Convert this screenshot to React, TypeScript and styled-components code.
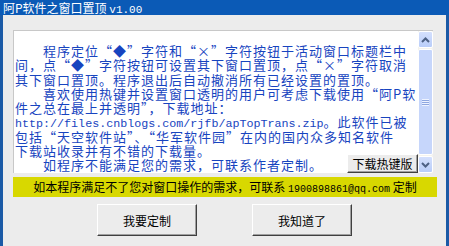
import React from "react";
import styled, { createGlobalStyle } from "styled-components";

const GlobalStyle = createGlobalStyle`
  html, body {
    margin: 0;
    padding: 0;
    background: #ececec;
  }
`;

const cjk = `"Noto Sans CJK SC", "Noto Sans", sans-serif`;

const Window = styled.div`
  width: 449px;
  height: 246px;
  display: flex;
  flex-direction: column;
  overflow: hidden;
  font-family: ${cjk};
  background: #ececec;
`;

const TitleBar = styled.div`
  height: 15px;
  background: #0b5ab6;
  color: #ffffff;
  font-size: 12px;
  line-height: 15px;
  padding-left: 3px;
  white-space: nowrap;
`;

const Body = styled.div`
  flex: 1;
  border-left: 3px solid #1b5aa6;
  border-right: 3px solid #1b5aa6;
  padding: 15px 0 0 10px;
  display: flex;
  flex-direction: column;
`;

const Panel = styled.div`
  position: relative;
  width: 420px;
  height: 143px;
  box-sizing: border-box;
  border-top: 1px solid #c8c8c8;
  border-left: 1px solid #c8c8c8;
  background: #ffffff;
  display: flex;
`;

const TextArea = styled.div`
  flex: 1;
  padding: 13px 0 0 1px;
  color: #1744bf;
  font-size: 13px;
  letter-spacing: 1px;
`;

const Line = styled.div<{ $indent?: boolean }>`
  height: 14.3px;
  line-height: 14.3px;
  white-space: nowrap;
  text-indent: ${(p) => (p.$indent ? "28px" : "0")};
`;

const Mono = styled.span<{ $size?: number }>`
  font-family: "Liberation Mono", monospace;
  font-size: ${(p) => p.$size ?? 11.7}px;
  letter-spacing: 0;
`;

const ScrollBar = styled.div`
  width: 15px;
  display: flex;
  flex-direction: column;
  background: #f4f3ee;
  gap: 1px;
`;

const ArrowBtn = styled.div`
  height: 17px;
  box-sizing: border-box;
  border: 1px solid #ffffff;
  border-radius: 2px;
  background: linear-gradient(#d4e0fd, #b9cdf9);
  display: flex;
  align-items: center;
  justify-content: center;
`;

const Thumb = styled.div`
  flex: 1;
  box-sizing: border-box;
  border: 1px solid #ffffff;
  border-radius: 2px;
  background: #c6d6fb;
  display: flex;
  align-items: center;
  justify-content: center;
`;

const Grip = styled.div`
  width: 7px;
  height: 7px;
  background: repeating-linear-gradient(#eef3ff 0 1px, #8ea7e0 1px 2px);
`;

const SmallButton = styled.button`
  position: absolute;
  right: 15px;
  bottom: 0;
  width: 71px;
  height: 19px;
  padding: 0;
  font-family: ${cjk};
  font-size: 12px;
  line-height: 17px;
  color: #000;
  background: #ececec;
  border: 1px solid;
  border-color: #ffffff #404040 #404040 #ffffff;
  box-shadow: inset -1px -1px 0 #a0a0a0;
`;

const Notice = styled.div`
  margin-top: 4px;
  width: 424px;
  height: 20px;
  background: #d8d800;
  color: #000;
  font-size: 12px;
  line-height: 20px;
  text-align: center;
  white-space: nowrap;
`;

const ButtonRow = styled.div`
  display: flex;
  justify-content: center;
  gap: 55px;
  margin-top: 7px;
  margin-left: -10px;
`;

const Button = styled.button`
  width: 100px;
  height: 32px;
  padding: 0;
  font-family: ${cjk};
  font-size: 12px;
  color: #000;
  background: #ececec;
  border: 1px solid;
  border-color: #ffffff #404040 #404040 #ffffff;
  box-shadow: inset -1px -1px 0 #a0a0a0;
`;

const Chevron = ({ up }: { up?: boolean }) => (
  <svg width="9" height="6" viewBox="0 0 9 6">
    <polyline
      points={up ? "1,5 4.5,1.5 8,5" : "1,1 4.5,4.5 8,1"}
      fill="none"
      stroke="#4d6185"
      strokeWidth="2"
    />
  </svg>
);

export default function App() {
  return (
    <Window lang="zh-CN">
      <GlobalStyle />
      <TitleBar>阿P软件之窗口置顶 <Mono $size={11}>v1.00</Mono></TitleBar>
      <Body>
        <Panel>
          <TextArea>
            <Line $indent>程序定位“◆”字符和“×”字符按钮于活动窗口标题栏中</Line>
            <Line>间，点“◆”字符按钮可设置其下窗口置顶，点“×”字符取消</Line>
            <Line>其下窗口置顶。程序退出后自动撤消所有已经设置的置顶。</Line>
            <Line $indent>喜欢使用热键并设置窗口透明的用户可考虑下载使用“阿P软</Line>
            <Line>件之总在最上并透明”，下载地址：</Line>
            <Line><Mono>http://files.cnblogs.com/rjfb/apTopTrans.zip</Mono>。此软件已被</Line>
            <Line>包括“天空软件站”、“华军软件园”在内的国内众多知名软件</Line>
            <Line>下载站收录并有不错的下载量。</Line>
            <Line $indent>如程序不能满足您的需求，可联系作者定制。</Line>
          </TextArea>
          <ScrollBar>
            <ArrowBtn><Chevron up /></ArrowBtn>
            <Thumb><Grip /></Thumb>
            <ArrowBtn><Chevron /></ArrowBtn>
          </ScrollBar>
          <SmallButton>下载热键版</SmallButton>
        </Panel>
        <Notice>
          如本程序满足不了您对窗口操作的需求，可联系 <Mono $size={10}>1900898861@qq.com</Mono> 定制
        </Notice>
        <ButtonRow>
          <Button>我要定制</Button>
          <Button>我知道了</Button>
        </ButtonRow>
      </Body>
    </Window>
  );
}
